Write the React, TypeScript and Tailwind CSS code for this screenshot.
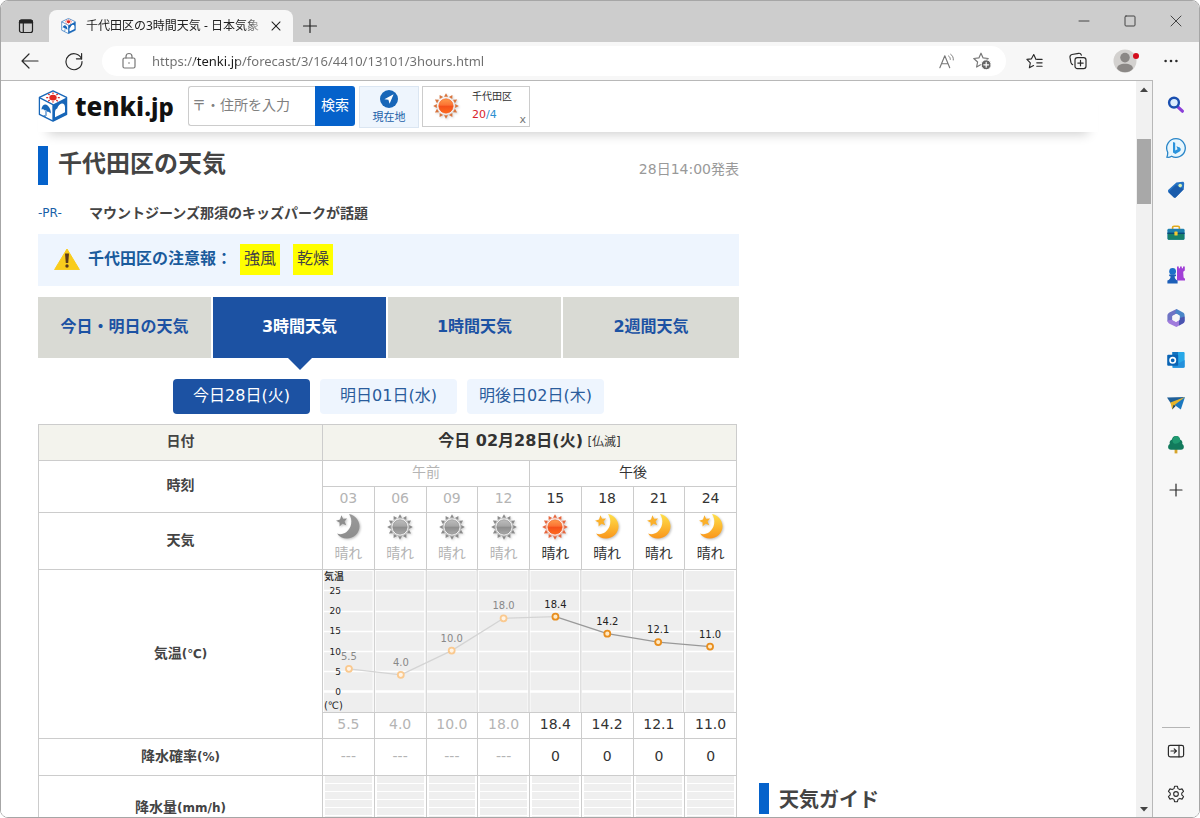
import type { ReactNode } from "react";

/* ---------- Browser chrome icons ---------- */

function Icon({ children, size = 20, viewBox = "0 0 20 20" }: { children: ReactNode; size?: number; viewBox?: string }) {
  return (
    <svg
      width={size}
      height={size}
      viewBox={viewBox}
      fill="none"
      stroke="currentColor"
      strokeWidth="1.2"
      strokeLinecap="round"
      strokeLinejoin="round"
      aria-hidden="true"
      className="block shrink-0"
    >
      {children}
    </svg>
  );
}

const starPath = "M9 2.2 L11.1 6.9 L16.2 7.5 L12.4 11 L13.4 16 L9 13.5 L4.6 16 L5.6 11 L1.8 7.5 L6.9 6.9 Z";

function TenkiCube({ className }: { className: string }) {
  return (
    <svg viewBox="0 0 30 32" className={className} aria-hidden="true">
      <path d="M15 .9 L28.6 7.4 V24.4 L15 31.2 L1.4 24.4 V7.4 Z" fill="#fff" stroke="#1766b8" strokeWidth="1.3" strokeLinejoin="round" />
      <path d="M15 14.6 L28.6 7.6 V24.4 L15 31.2 Z" fill="#1766b8" />
      <path d="M1.4 7.6 L15 14.6 V31" fill="none" stroke="#1766b8" strokeWidth="1.3" />
      <path d="M17 27.2 V22.6 C17 20.4 17.8 19 19.2 18.6 C20 15.4 22.2 13.8 23.8 13.6 C25.8 13.4 27 15.2 27 17.2 V22.2 Z" fill="#fff" />
      <path d="M3.4 19.6 C3.8 15.2 7 13.2 9.6 15.4 C12 17.4 13 20.4 12.8 23.6 C11.4 22 10.2 21.6 9.6 21.9 C8.6 20.2 7.6 19.8 6.8 20.4 C5.8 19 4.6 18.8 3.4 19.6 Z" fill="#1766b8" />
      <path d="M8 20.6 V25.4 C7.8 27 6 26.4 6.2 25" fill="none" stroke="#1766b8" strokeWidth="1" />
      <ellipse cx="15" cy="7.6" rx="3.7" ry="2.9" fill="#e02a22" />
      <g stroke="#e02a22" strokeWidth="1.3">
        <path d="M15 2.6 V3.9 M15 11.3 V12.4 M8.2 7.6 H10.2 M19.8 7.6 H21.8 M10.2 4 L11.7 5.1 M18.3 10.1 L19.8 11.2 M10.2 11.2 L11.7 10.1 M18.3 5.1 L19.8 4" />
      </g>
    </svg>
  );
}

/* ---------- Weather icons ---------- */

const rayAngles = [0, 30, 60, 90, 120, 150, 180, 210, 240, 270, 300, 330];

function Sun({ faded = false, ring = true }: { faded?: boolean; ring?: boolean }) {
  const id = faded ? "sun-faded" : "sun-bright";
  const ray = faded ? "#8a8a8a" : ring ? "#e8663c" : "#d9743c";
  return (
    <svg viewBox="0 0 28 28" className="block size-7 drop-shadow-[1px_1px_1px_rgba(0,0,0,0.2)]" aria-hidden="true">
      <defs>
        <linearGradient id={id} x1="0" y1="0" x2="0" y2="1">
          <stop offset="0" stopColor={faded ? "#bdbdbd" : "#ff9a4a"} />
          <stop offset=".45" stopColor={faded ? "#a6a6a6" : "#fb7233"} />
          <stop offset=".5" stopColor={faded ? "#8c8c8c" : "#f4501a"} />
          <stop offset="1" stopColor={faded ? "#a8a8a8" : "#ff6a1c"} />
        </linearGradient>
      </defs>
      {rayAngles.map((angle) => (
        <path key={angle} d="M14 1.2 L16 4.8 H12 Z" fill={ray} transform={`rotate(${angle} 14 14)`} />
      ))}
      {ring && <circle cx="14" cy="14" r="9" fill={faded ? "#aaa" : "#f9a184"} />}
      <circle cx="14" cy="14" r="8.4" fill="#fff" />
      <circle cx="14" cy="14" r="7.3" fill={`url(#${id})`} stroke={faded ? "#888" : "#e9622d"} strokeWidth=".6" />
    </svg>
  );
}

function Moon({ faded = false }: { faded?: boolean }) {
  const id = faded ? "moon-faded" : "moon-bright";
  return (
    <svg viewBox="0 0 25 26" className="block h-7 w-[26px] drop-shadow-[1px_1px_1px_rgba(0,0,0,0.25)]" aria-hidden="true">
      <defs>
        <linearGradient id={id} x1="0" y1="0" x2="0" y2="1">
          <stop offset="0" stopColor={faded ? "#9a9a9a" : "#ffe04a"} />
          <stop offset="1" stopColor={faded ? "#8d8d8d" : "#f9961c"} />
        </linearGradient>
      </defs>
      <path
        d="M13.5 .6 C19 1.6 23.6 6.6 23.6 12.3 C23.6 19 18 24 11.5 24 C7.5 24 4 22.5 2 19.2 C5 20.4 8 20 11 17.8 C16 14 17.4 6.6 13.5 .6 Z"
        fill={`url(#${id})`}
      />
      <path
        d="M6.2 1.6 L7.8 5.1 L11.6 4.9 L9.2 7.8 L10.8 11.2 L7.2 9.9 L4.4 12.4 L4.4 8.7 L1 6.9 L4.8 5.9 Z"
        fill={faded ? "#8d8d8d" : "#fbb02a"}
      />
    </svg>
  );
}

/* ---------- Window frame ---------- */

function TitleBar() {
  return (
    <div className="flex h-[41px] shrink-0 items-end bg-[#cdcdcd] text-[#222]">
      <button aria-label="タブ操作メニュー" className="mb-1.5 ml-[15px] mr-[13px] flex size-5 items-center justify-center">
        <Icon viewBox="0 0 20 20">
          <rect x="3.5" y="4" width="13" height="12.5" rx="2" />
          <path d="M3.5 6.2 C3.5 4.6 4.2 4 5.5 4 H14.5 C15.8 4 16.5 4.6 16.5 6.2 V7 H3.5 Z" fill="currentColor" />
          <path d="M7.3 7 V16.5" />
        </Icon>
      </button>
      <div className="flex h-8 w-[244px] items-center rounded-t-lg bg-[#f7f7f7] pl-3 pr-1.5">
        <TenkiCube className="block h-4 w-[15px] shrink-0" />
        <span className="ml-2.5 w-[180px] overflow-hidden whitespace-nowrap font-['Noto_Sans','Noto_Sans_CJK_JP',sans-serif] text-xs leading-5 [mask-image:linear-gradient(to_right,black_88%,transparent)]">
          千代田区の3時間天気 - 日本気象
        </span>
        <button aria-label="タブを閉じる" className="flex size-5 items-center justify-center">
          <Icon size={14} viewBox="0 0 16 16">
            <path d="M3.4 3.4 L12.6 12.6 M12.6 3.4 L3.4 12.6" />
          </Icon>
        </button>
      </div>
      <button aria-label="新しいタブ" className="mb-1.5 ml-[7px] flex size-5 items-center justify-center">
        <Icon size={18} viewBox="0 0 18 18">
          <path d="M9 2.5 V15.5 M2.5 9 H15.5" />
        </Icon>
      </button>
      <div className="mb-[11px] ml-auto mr-[13px] flex gap-[26px] text-[#444]">
        <button aria-label="最小化" className="flex size-5 items-center justify-center">
          <Icon size={12} viewBox="0 0 12 12">
            <path d="M1 6 H11" strokeWidth="1" />
          </Icon>
        </button>
        <button aria-label="最大化" className="flex size-5 items-center justify-center">
          <Icon size={12} viewBox="0 0 12 12">
            <rect x="1" y="1" width="10" height="10" rx="1" strokeWidth="1" />
          </Icon>
        </button>
        <button aria-label="閉じる" className="flex size-5 items-center justify-center">
          <Icon size={12} viewBox="0 0 12 12">
            <path d="M1 1 L11 11 M11 1 L1 11" strokeWidth="1" />
          </Icon>
        </button>
      </div>
    </div>
  );
}

function Toolbar() {
  return (
    <div className="flex h-[38px] shrink-0 items-center bg-[#f7f7f7] text-[#2b2b2b]">
      <button aria-label="戻る" className="ml-[17px] flex size-6 items-center justify-center">
        <Icon>
          <path d="M18 10 H2.5 M9 3 L2 10 L9 17" />
        </Icon>
      </button>
      <button aria-label="更新" className="ml-5 flex size-6 items-center justify-center">
        <Icon>
          <path d="M17.6 8.2 A8 8 0 1 0 18 10.6 M17.6 2.6 V7.8 H12.4" />
        </Icon>
      </button>
      <form className="ml-4 flex h-[30px] flex-1 items-center rounded-full bg-white pl-[17px] pr-3 text-[#777]" onSubmit={(e) => e.preventDefault()}>
        <button type="button" aria-label="サイト情報" className="flex size-5 items-center justify-center">
          <Icon size={18} viewBox="0 0 18 18">
            <rect x="3" y="6" width="12" height="10" rx="1.5" />
            <path d="M6 6 V4.5 C6 .5 12 .5 12 4.5 V6" />
            <circle cx="9" cy="11" r=".8" fill="currentColor" stroke="none" />
          </Icon>
        </button>
        <input
          aria-label="アドレス"
          defaultValue="https://tenki.jp/forecast/3/16/4410/13101/3hours.html"
          className="ml-[13px] h-6 min-w-0 flex-1 bg-[linear-gradient(to_right,#6e6e6e_43px,#1a1a1a_43px,#1a1a1a_85px,#6e6e6e_85px)] bg-clip-text font-['Noto_Sans',sans-serif] text-[13px] leading-6 text-transparent outline-none"
        />
        <button type="button" aria-label="音声で読み上げる" className="flex size-6 items-center justify-center">
          <Icon size={19}>
            <path d="M3 16.5 L8.2 4 L13.4 16.5 M4.8 12.4 H11.6" />
            <path d="M12.2 4.2 C13.4 5 14 6.2 14 7.8 M14.4 2.4 C16.4 3.8 17.4 5.8 17.2 8.4" strokeWidth="1" />
          </Icon>
        </button>
        <button type="button" aria-label="お気に入りに追加" className="ml-3 flex size-6 items-center justify-center">
          <Icon>
            <path d={starPath} />
            <circle cx="14.2" cy="13.8" r="5" fill="#666" stroke="#fff" strokeWidth="1" />
            <path d="M14.2 11.4 V16.2 M11.8 13.8 H16.6" stroke="#fff" />
          </Icon>
        </button>
      </form>
      <div className="ml-4 mr-4 flex items-center gap-5">
        <button aria-label="お気に入り" className="flex size-6 items-center justify-center">
          <Icon size={19}>
            <path d="M11.6 8 L9.2 2.6 L6.8 7.2 L2 7.8 L5.6 11.4 L4.6 16.6 L9 14.2" />
            <path d="M12.4 7.8 H18 M12.4 11.4 H18 M12.4 15 H18" />
          </Icon>
        </button>
        <button aria-label="コレクション" className="flex size-6 items-center justify-center">
          <Icon>
            <rect x="7" y="6.6" width="11" height="11" rx="2.4" />
            <path d="M12.5 9.4 V14.8 M9.8 12.1 H15.2" />
            <path d="M4.6 13.6 C3.6 13.2 3.2 12.4 2.9 11.4 L2 6.4 C1.8 4.8 2.6 3.8 4 3.5 L10.6 2.3 C12 2.1 13 2.8 13.4 4.2" />
          </Icon>
        </button>
        <button aria-label="プロフィール" className="relative ml-[3px] size-6">
          <svg viewBox="0 0 24 24" className="block size-6" aria-hidden="true">
            <circle cx="12" cy="12" r="11.5" fill="#d3d1cf" />
            <circle cx="12" cy="8.6" r="4.8" fill="#8b8886" />
            <path d="M4 19.4 C4.6 16.4 7 14.8 12 14.8 S19.4 16.4 20 19.4 C18 22 15 23.2 12 23.2 S6 22 4 19.4 Z" fill="#8b8886" />
          </svg>
          <span className="absolute -right-0.5 top-1 size-1.5 rounded-full bg-[#d40d1c]" />
        </button>
        <button aria-label="設定など" className="ml-0.5 flex size-6 items-center justify-center">
          <Icon>
            <g fill="currentColor" stroke="none">
              <circle cx="4.6" cy="10" r="1.3" />
              <circle cx="10" cy="10" r="1.3" />
              <circle cx="15.4" cy="10" r="1.3" />
            </g>
          </Icon>
        </button>
      </div>
    </div>
  );
}

const sidebarApps: { name: string; art: ReactNode }[] = [
  {
    name: "検索",
    art: (
      <>
        <path d="M11.8 11.8 L16.4 16.2" stroke="#8b3fd8" strokeWidth="3.2" strokeLinecap="round" />
        <circle cx="8" cy="7.6" r="4.9" fill="#dceefd" stroke="#1a4fb0" strokeWidth="2.4" />
      </>
    ),
  },
  {
    name: "Bing",
    art: (
      <>
        <path d="M10 .7 A9.3 9.3 0 1 1 5.6 18.2 C4 19.2 2 19.4 .9 19.2 C1.6 17.6 1.8 16.4 1.7 14.2 A9.3 9.3 0 0 1 10 .7 Z" fill="#e8f6fd" stroke="#2a86c8" strokeWidth="1.3" />
        <path d="M7 4 L9.2 4.8 V12.4 L11.6 11.2 L10.4 8.2 L13.8 9.4 C15.2 10.6 15 12.8 13.6 13.6 L9.4 16 L7 14.6 Z" fill="#2a93dc" />
      </>
    ),
  },
  {
    name: "ショッピング",
    art: (
      <>
        <path d="M10.4 2.6 L16.6 1.8 C17.6 1.8 18.2 2.4 18.2 3.4 L17.8 9.2 L10 17.2 C9.2 18 8.4 18 7.6 17.2 L2.4 12.2 C1.8 11.4 1.8 10.6 2.4 9.8 Z" fill="#2673c4" />
        <path d="M2.4 12.2 L10 5 L17.8 9.2 L10 17.2 C9.2 18 8.4 18 7.6 17.2 Z" fill="#124c9c" opacity=".6" />
        <circle cx="14.2" cy="5.6" r="1.8" fill="#d9f1b4" />
      </>
    ),
  },
  {
    name: "ツール",
    art: (
      <>
        <path d="M6.6 6.4 V4.6 C6.6 3.8 7.2 3.2 8 3.2 H12 C12.8 3.2 13.4 3.8 13.4 4.6 V6.4" fill="none" stroke="#e2aa1c" strokeWidth="1.6" />
        <rect x="1.4" y="5.8" width="17.2" height="11" rx="1.4" fill="#1d7fae" />
        <path d="M1.8 10.6 H18.2 V15.4 C18.2 16.4 17.8 16.8 17 16.8 H3 C2.2 16.8 1.8 16.2 1.8 15.4 Z" fill="#18806a" />
        <rect x="1.4" y="9.6" width="17.2" height="1.4" fill="#0c4a78" />
        <rect x="8.4" y="8.6" width="3.2" height="4" rx=".6" fill="#f4c832" />
      </>
    ),
  },
  {
    name: "ゲーム",
    art: (
      <>
        <path d="M11 1.6 H12.8 V3.2 H14 V1.6 H15.8 V3.2 H17 V1.6 H18.8 V5.4 L17.2 6.8 L17.6 12.4 L19 13.8 V15.4 H11 Z" fill="#a13fd6" />
        <circle cx="6.6" cy="6.4" r="3.4" fill="#1d6fc8" />
        <path d="M3.2 9.4 H10 V11 L8.6 11.4 C8.8 13.6 9.8 14.6 11.6 15.6 V18.4 H1.4 V15.6 C3.4 14.6 4.4 13.6 4.6 11.4 L3.2 11 Z" fill="#1d5fb8" />
      </>
    ),
  },
  {
    name: "Microsoft 365",
    art: (
      <>
        <path d="M10.6 1 L3.4 4.4 C2 5.2 1.4 6.2 1.4 7.6 V12.4 C1.4 13.6 2.2 14 3.4 13.4 L6.4 11.8 V8 L12.8 4.4 Z" fill="#6f74c4" />
        <path d="M10.6 1 L17 4.6 C18.2 5.2 18.6 6.2 18.6 7.6 V13 L13.6 10.2 V7.4 L9 4.8 Z" fill="#4a86c8" />
        <path d="M18.6 12.6 C18.6 14 18 15 16.8 15.6 L10.4 19 L3 15.4 C2 14.8 1.4 13.8 1.4 12.6 L6.4 11.8 L10 13.8 L13.6 11.6 L17 9 Z" fill="#a07bdc" />
        <path d="M13.6 10 L18.6 8.6 V12.8 C18.6 14 18 15 16.8 15.6 L13 17.6 V12 Z" fill="#4a55b0" />
        <path d="M10 6 L13.6 8 V12 L10 14 L6.4 12 V8 Z" fill="#f7f7f7" />
      </>
    ),
  },
  {
    name: "Outlook",
    art: (
      <>
        <path d="M6.4 2 H17.4 C18.2 2 18.6 2.4 18.6 3.2 V16.6 C18.6 17.4 18.2 17.8 17.4 17.8 H6.4 Z" fill="#28a8e8" />
        <path d="M6.4 2 H12 V8 H6.4 Z" fill="#1273c0" />
        <path d="M6 10 L12.4 13.6 L18.6 10 V16.6 C18.6 17.4 18.2 17.8 17.4 17.8 H7 Z" fill="#2490dc" />
        <rect x="1.2" y="4.8" width="11" height="11" rx="1" fill="#0a64b4" />
        <circle cx="6.7" cy="10.3" r="2.7" fill="none" stroke="#fff" strokeWidth="1.6" />
      </>
    ),
  },
  {
    name: "Drop",
    art: (
      <>
        <path d="M1 4.6 L19 4 L5.6 11.4 Z" fill="#1f5f98" />
        <path d="M19 4 L4.4 9.6 L6.2 16.4 L9.6 12.6 Z" fill="#e8b52a" />
        <path d="M19 4 L8.6 12 L14.8 16.6 Z" fill="#1b78c0" />
        <path d="M6.2 16.4 L7.6 11.8 L9.6 13 Z" fill="#14406c" />
      </>
    ),
  },
  {
    name: "Eツリー",
    art: (
      <>
        <path d="M8.6 13 H11.4 V18.4 H8.6 Z" fill="#d6a52c" />
        <path d="M10 1 C12.6 1 13.8 2.8 14 4.6 C16.2 5.4 16.8 7.6 16.2 9 C18.4 10 18.8 14.6 15 14.8 H5 C1.2 14.6 1.6 10 3.8 9 C3.2 7.6 3.8 5.4 6 4.6 C6.2 2.8 7.4 1 10 1 Z" fill="#127a5c" />
        <path d="M10 1 C12.6 1 13.8 2.8 14 4.6 C15.4 7 11 9.6 8 8.4 C5.6 7.4 6 2 10 1 Z" fill="#1f9a70" />
      </>
    ),
  },
];

function Sidebar() {
  return (
    <nav aria-label="サイドバー" className="flex w-[46px] shrink-0 flex-col items-center bg-[#f7f7f7] pb-[11px] pt-[13px] text-[#2b2b2b]">
      <div className="flex h-[364px] flex-col justify-between">
        {sidebarApps.map((app) => (
          <button key={app.name} aria-label={app.name} className="flex size-6 items-center justify-center">
            <svg viewBox="0 0 20 20" className="size-5" aria-hidden="true">
              {app.art}
            </svg>
          </button>
        ))}
      </div>
      <button aria-label="サイドバーをカスタマイズ" className="mt-[21px] flex size-6 items-center justify-center">
        <Icon size={14} viewBox="0 0 14 14">
          <path d="M7 1 V13 M1 7 H13" />
        </Icon>
      </button>
      <hr className="mb-[11px] mt-auto w-7 border-[#b5b5b5]" />
      <button aria-label="サイドバーを非表示" className="flex size-6 items-center justify-center">
        <Icon size={18} viewBox="0 0 18 18">
          <rect x="1.4" y="3.4" width="15.2" height="11.4" rx="1.8" />
          <path d="M12 3.4 V14.8 M4 9 H9.2 M7.2 6.8 L9.4 9 L7.2 11.2" />
        </Icon>
      </button>
      <button aria-label="設定" className="mt-[19px] flex size-6 items-center justify-center">
        <Icon size={18} viewBox="0 0 20 20">
          <circle cx="10" cy="10" r="2.6" />
          <path d="M8.4 1.4 H11.6 L12.2 4 L14.2 5.1 L16.7 4.3 L18.4 7.1 L16.4 9 V11 L18.4 12.9 L16.7 15.7 L14.2 14.9 L12.2 16 L11.6 18.6 H8.4 L7.8 16 L5.8 14.9 L3.3 15.7 L1.6 12.9 L3.6 11 V9 L1.6 7.1 L3.3 4.3 L5.8 5.1 L7.8 4 Z" />
        </Icon>
      </button>
    </nav>
  );
}

function Scrollbar() {
  return (
    <div aria-hidden="true" className="flex w-4 shrink-0 flex-col items-center bg-[#f1f1f1]">
      <svg viewBox="0 0 16 16" className="block size-4 shrink-0">
        <path d="M4 11 L8 6.4 L12 11 Z" fill="#444" />
      </svg>
      <div className="mt-[42px] h-[65px] w-3.5 bg-[#a8a8a8]" />
      <svg viewBox="0 0 16 16" className="mt-auto block size-4 shrink-0">
        <path d="M4 6 L8 10.4 L12 6 Z" fill="#444" />
      </svg>
    </div>
  );
}

/* ---------- Weather page ---------- */

function SiteHeader() {
  return (
    <header className="flex h-[51px] items-start gap-1 bg-white pt-[5px] shadow-[0_12px_12px_-10px_rgba(0,0,0,0.2)]">
      <a href="#top" className="mr-2.5 flex h-10 w-[136px] items-center gap-[7px] font-['Noto_Sans',sans-serif] font-extrabold text-[#111]">
        <TenkiCube className="block h-8 w-[30px] shrink-0" />
        <span className="text-[26px] leading-10">
          tenki<span className="text-2xl">.jp</span>
        </span>
      </a>
      <form className="flex h-10" onSubmit={(e) => e.preventDefault()}>
        <input
          aria-label="住所検索"
          placeholder="〒・住所を入力"
          className="w-[127px] rounded-l-[3px] border border-r-0 border-[#ccc] px-[3px] pb-0.5 text-sm placeholder:text-[#808080]"
        />
        <button className="w-10 rounded-r-[3px] bg-[#0562cb] pb-0.5 text-sm text-white">検索</button>
      </form>
      <a href="#here" className="flex h-[42px] w-[60px] flex-col items-center border border-[#dbe6f2] bg-[#eef5fd] pt-[3px] text-[11px] leading-4 text-[#1a5fa8]">
        <svg viewBox="0 0 18 18" className="mb-0.5 block size-[18px]" aria-hidden="true">
          <circle cx="9" cy="9" r="9" fill="#1766b8" />
          <path d="M13.6 4.2 L4.4 9.2 L8.4 9.8 L9.6 13.8 Z" fill="#fff" />
        </svg>
        現在地
      </a>
      <div className="relative -ml-px flex h-[41px] w-[108px] items-start border border-[#ccc] pl-[9px] pt-[5px]">
        <Sun ring={false} />
        <a href="#chiyoda" className="ml-3 mt-[-4px] text-[10px] leading-[18px] text-[#333]">
          千代田区
          <span className="block text-[11px] text-[#2b8fd0]">
            <span className="text-[#d8232a]">20</span>/4
          </span>
        </a>
        <button aria-label="地点を削除" className="absolute bottom-0 right-[3px] text-[11px] leading-3 text-[#777]">
          x
        </button>
      </div>
    </header>
  );
}

const periodTabs = ["今日・明日の天気", "3時間天気", "1時間天気", "2週間天気"];
const dayTabs = ["今日28日(火)", "明日01日(水)", "明後日02日(木)"];

type Hour = { hour: string; icon: "sun" | "moon"; temp: number; rain: string; past: boolean };

const hours: Hour[] = [
  { hour: "03", icon: "moon", temp: 5.5, rain: "---", past: true },
  { hour: "06", icon: "sun", temp: 4.0, rain: "---", past: true },
  { hour: "09", icon: "sun", temp: 10.0, rain: "---", past: true },
  { hour: "12", icon: "sun", temp: 18.0, rain: "---", past: true },
  { hour: "15", icon: "sun", temp: 18.4, rain: "0", past: false },
  { hour: "18", icon: "moon", temp: 14.2, rain: "0", past: false },
  { hour: "21", icon: "moon", temp: 12.1, rain: "0", past: false },
  { hour: "24", icon: "moon", temp: 11.0, rain: "0", past: false },
];

const tone = (past: boolean) => (past ? "text-[#b4b4b4]" : "text-[#333]");
const textCell = "border border-[#ccc] px-0 pb-[3px] pt-0 text-center font-normal";
const plainCell = "border border-[#ccc] p-0";
const rowHead = "border border-[#ccc] px-0 pb-[3px] pt-0 text-center text-sm font-bold text-[#444]";

function TemperatureChart() {
  const step = 414 / 8;
  const px = (i: number) => Math.round(step * i + step / 2);
  const py = (t: number) => 121 - t * 4.04;
  return (
    <svg viewBox="0 0 414 142" preserveAspectRatio="none" className="block h-[142px] w-full" role="img" aria-label="気温グラフ">
      <rect width="414" height="142" fill="#fff" />
      {hours.map((h, i) => (
        <rect key={h.hour} x={i * step + 1} y="1" width={step - 3} height="141" fill="#eee" />
      ))}
      {[20, 41, 61, 81, 101].map((y) => (
        <path key={y} d={`M0 ${y}.5 H414`} stroke="#fff" strokeWidth="1.4" />
      ))}
      <path d="M0 121.5 H414" stroke="#fff" strokeWidth="2.6" />
      {[1, 2, 3, 4, 5, 6, 7].map((i) => (
        <path key={i} d={`M${Math.round(i * step) - 0.5} 0 V142`} stroke="#ccc" />
      ))}
      {hours.slice(1).map((h, i) => (
        <line key={h.hour} x1={px(i)} y1={py(hours[i].temp)} x2={px(i + 1)} y2={py(h.temp)} stroke={h.past || hours[i].past ? "#d4d4d4" : "#999"} strokeWidth="1.3" />
      ))}
      <g fontFamily="'DejaVu Sans', sans-serif" fontSize="10" textAnchor="middle">
        {hours.map((h, i) => (
          <g key={h.hour}>
            <circle cx={px(i)} cy={py(h.temp)} r="3" fill={h.past ? "#fff4e6" : "#ffe9c4"} stroke={h.past ? "#fac98f" : "#e88e1e"} strokeWidth="1.8" />
            <text x={px(i)} y={py(h.temp) - 9} fill={h.past ? "#888" : "#222"}>
              {h.temp.toFixed(1)}
            </text>
          </g>
        ))}
      </g>
      <g fontFamily="'DejaVu Sans', 'Noto Sans CJK JP', sans-serif" fontSize="10" fill="#222">
        <text x="1" y="10" fontWeight="500">気温</text>
        {[25, 20, 15, 10, 5, 0].map((t) => (
          <text key={t} x="18" y={125 - t * 4.04} fontSize="9" textAnchor="end">
            {t}
          </text>
        ))}
        <text x="1" y="139">(℃)</text>
      </g>
    </svg>
  );
}

function ForecastTable() {
  return (
    <table className="w-[calc(100%-2px)] table-fixed border-collapse text-sm">
      <colgroup>
        <col className="w-[284px]" />
        {hours.map((h) => (
          <col key={h.hour} />
        ))}
      </colgroup>
      <tbody>
        <tr className="h-9 bg-[#f3f3ed]">
          <th className={rowHead}>日付</th>
          <td colSpan={8} className={`${textCell} text-[#333]`}>
            <strong className="text-base leading-6">今日 02月28日(火)</strong> <span className="text-xs">[仏滅]</span>
          </td>
        </tr>
        <tr className="h-[26px]">
          <th rowSpan={2} className={rowHead}>時刻</th>
          <td colSpan={4} className={`${textCell} ${tone(true)}`}>午前</td>
          <td colSpan={4} className={`${textCell} ${tone(false)}`}>午後</td>
        </tr>
        <tr className="h-[26px]">
          {hours.map((h) => (
            <td key={h.hour} className={`${textCell} ${tone(h.past)}`}>{h.hour}</td>
          ))}
        </tr>
        <tr className="h-[57px]">
          <th className={rowHead}>天気</th>
          {hours.map((h) => (
            <td key={h.hour} className={`${textCell} ${tone(h.past)}`}>
              <div className="flex flex-col items-center">
                {h.icon === "sun" ? <Sun faded={h.past} /> : <Moon faded={h.past} />}
                <span className="leading-[25px]">晴れ</span>
              </div>
            </td>
          ))}
        </tr>
        <tr className="h-[143px]">
          <th rowSpan={2} className={rowHead}>
            気温<span className="text-xs">(℃)</span>
          </th>
          <td colSpan={8} className={plainCell}>
            <TemperatureChart />
          </td>
        </tr>
        <tr className="h-[26px]">
          {hours.map((h) => (
            <td key={h.hour} className={`${textCell} ${tone(h.past)}`}>{h.temp.toFixed(1)}</td>
          ))}
        </tr>
        <tr className="h-[37px]">
          <th className={rowHead}>
            降水確率<span className="text-xs">(%)</span>
          </th>
          {hours.map((h) => (
            <td key={h.hour} className={`${textCell} ${tone(h.past)}`}>{h.rain}</td>
          ))}
        </tr>
        <tr className="h-[66px]">
          <th className={rowHead}>
            降水量<span className="text-xs">(mm/h)</span>
          </th>
          {hours.map((h) => (
            <td key={h.hour} className={plainCell}>
              <div className="h-[65px] border-x-2 border-white bg-[repeating-linear-gradient(to_bottom,#efefef_0px,#efefef_7px,#fff_7px,#fff_8px)]" />
            </td>
          ))}
        </tr>
      </tbody>
    </table>
  );
}

function WeatherPage() {
  return (
    <div className="min-w-0 flex-1 overflow-hidden bg-white pl-[37px] pr-[38px] font-['DejaVu_Sans','Noto_Sans_CJK_JP',sans-serif]">
      <SiteHeader />
      <div className="grid grid-cols-[minmax(0,701fr)_minmax(0,339fr)] gap-5 pt-3.5">
        <main>
          <div className="flex h-[39px] items-center justify-between">
            <h1 className="h-[39px] border-l-[10px] border-[#0562cb] pl-2.5 text-2xl font-bold leading-9 text-[#444]">千代田区の天気</h1>
            <time className="pt-1.5 text-sm text-[#999]">28日14:00発表</time>
          </div>
          <p className="mt-4 flex h-6 items-center">
            <span className="w-[51px] font-['DejaVu_Sans',sans-serif] text-xs text-[#1a5fa8]">-PR-</span>
            <a href="#pr" className="text-sm font-bold text-[#444]">マウントジーンズ那須のキッズパークが話題</a>
          </p>
          <section className="mt-[9px] flex h-[52px] items-center bg-[#eef5fe] pb-0.5 pl-4">
            <svg viewBox="0 0 26 22" className="mr-2 block h-[22px] w-[26px]" aria-hidden="true">
              <path d="M13 1 L25.4 21.6 H.6 Z" fill="#f9cc1c" stroke="#f9cc1c" strokeWidth="1" strokeLinejoin="round" />
              <path d="M11 5.4 H15 L14.2 15 H11.8 Z" fill="#5a3a1c" />
              <circle cx="13" cy="18" r="1.7" fill="#5a3a1c" />
            </svg>
            <a href="#warning" className="text-base font-bold leading-6 text-[#1a5b9c]">千代田区の注意報：</a>
            <span className="ml-2 bg-[#ff0] px-1 pb-0.5 text-base leading-[29px] text-[#444]">強風</span>
            <span className="ml-[13px] bg-[#ff0] px-1 pb-0.5 text-base leading-[29px] text-[#444]">乾燥</span>
          </section>
          <nav aria-label="予報の種類" className="mt-[11px] grid grid-cols-[173fr_173fr_173fr_176fr] gap-0.5">
            {periodTabs.map((label, i) => (
              <a
                key={label}
                href="#forecast"
                className={
                  i === 1
                    ? "relative bg-[#1c52a3] pb-0.5 text-center text-base font-bold leading-[59px] text-white after:absolute after:left-1/2 after:top-full after:-ml-3 after:border-x-[12px] after:border-t-[12px] after:border-x-transparent after:border-t-[#1c52a3] after:content-['']"
                    : "bg-[#d9dad4] pb-0.5 text-center text-base font-bold leading-[59px] text-[#1c52a3]"
                }
              >
                {label}
              </a>
            ))}
          </nav>
          <nav aria-label="日付" className="mt-[21px] flex justify-center gap-2.5">
            {dayTabs.map((label, i) => (
              <a
                key={label}
                href="#day"
                className={
                  i === 0
                    ? "w-[137px] rounded bg-[#1c52a3] pb-0.5 text-center text-base leading-[33px] text-white"
                    : "w-[137px] rounded bg-[#eef5fe] pb-0.5 text-center text-base leading-[33px] text-[#2a5c9c]"
                }
              >
                {label}
              </a>
            ))}
          </nav>
          <div className="mt-2.5">
            <ForecastTable />
          </div>
        </main>
        <aside className="pt-[637px]">
          <h2 className="h-[31px] border-l-[10px] border-[#0562cb] pl-2.5 text-xl font-bold leading-[35px] text-[#444]">天気ガイド</h2>
        </aside>
      </div>
    </div>
  );
}

export default function App() {
  return (
    <div className="h-screen bg-white">
      <div className="flex h-full flex-col overflow-hidden rounded-lg border border-[#a6a6a6]">
        <TitleBar />
        <Toolbar />
        <div className="flex min-h-0 flex-1 bg-[#f7f7f7]">
          <div className="flex min-w-0 flex-1 border-r border-t border-[#b8b8b8]">
            <WeatherPage />
            <Scrollbar />
          </div>
          <Sidebar />
        </div>
      </div>
    </div>
  );
}
